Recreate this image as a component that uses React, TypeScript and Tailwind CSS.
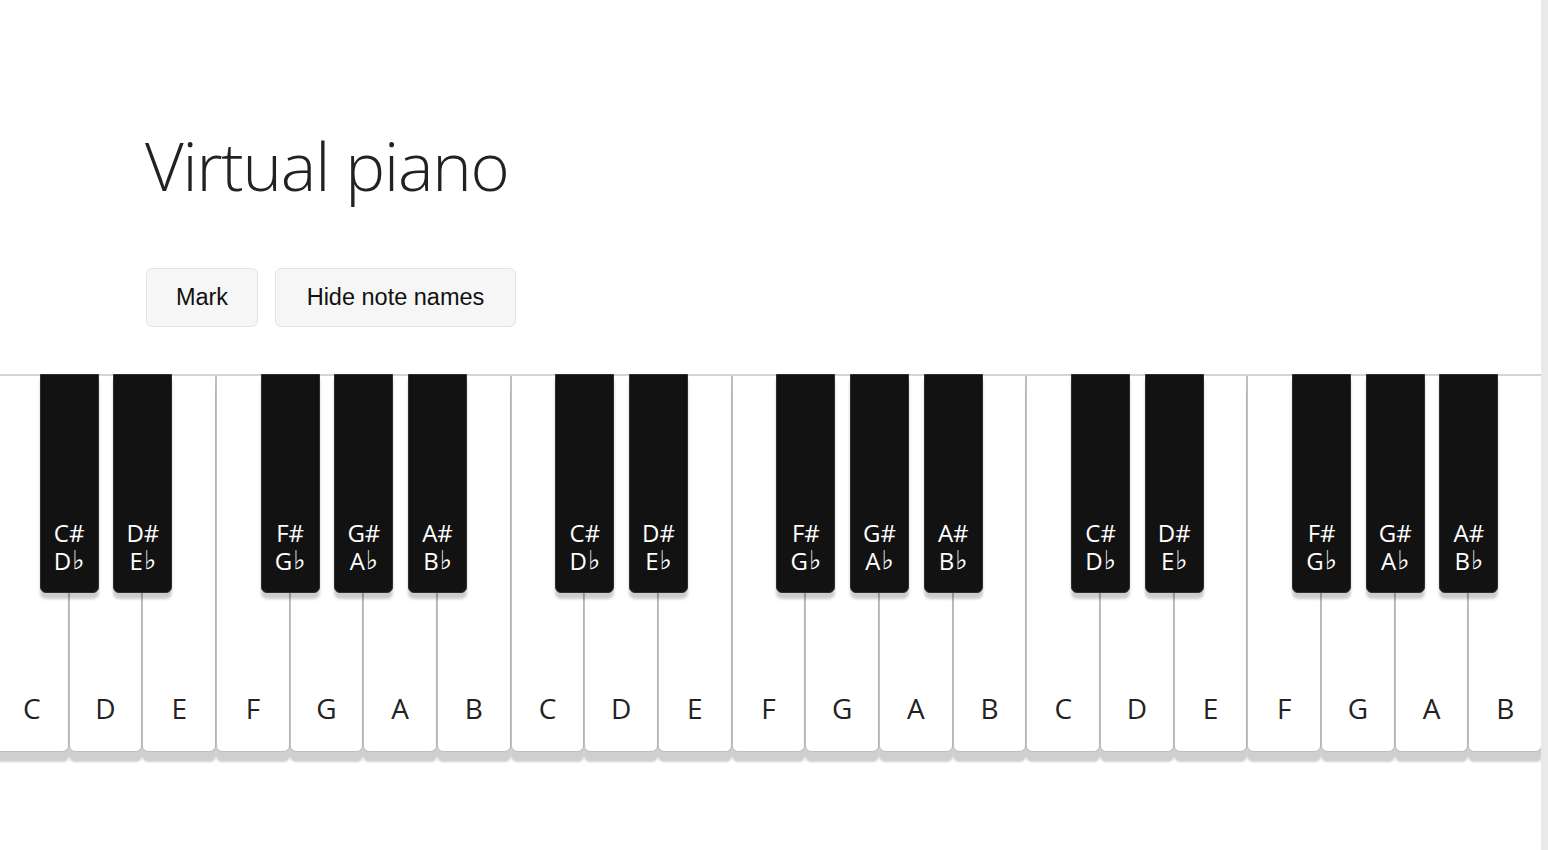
import React from "react";

type WhiteKey = { name: string; black?: [string, string] };

const octave: WhiteKey[] = [
  { name: "C", black: ["C#", "D"] },
  { name: "D", black: ["D#", "E"] },
  { name: "E" },
  { name: "F", black: ["F#", "G"] },
  { name: "G", black: ["G#", "A"] },
  { name: "A", black: ["A#", "B"] },
  { name: "B" },
];

const keys: WhiteKey[] = [...octave, ...octave, ...octave];

export default function App() {
  return (
    <div className="flex h-[850px] w-[1548px] overflow-hidden bg-white">
      <main className="relative h-full w-[1541px] overflow-hidden">
        <div className="pl-[145px]">
          <h1
            className="mt-[124px] text-[67px] leading-[82px] font-light tracking-[-1.2px] text-[#222222]"
            style={{ fontFamily: '"Open Sans", "Liberation Sans", sans-serif' }}
          >
            Virtual piano
          </h1>
          <div
            className="mt-[62px] ml-[1px] flex gap-[17px] text-[23.5px] text-[#111111]"
            style={{ fontFamily: '"Liberation Sans", Arial, sans-serif' }}
          >
            <button className="flex h-[59px] w-[112px] items-center justify-center rounded-[6px] border border-[#e4e4e4] bg-[#f6f6f6]">
              Mark
            </button>
            <button className="flex h-[59px] w-[241px] items-center justify-center rounded-[6px] border border-[#e4e4e4] bg-[#f6f6f6]">
              Hide note names
            </button>
          </div>
        </div>

        <div className="mt-[47px] border-t-2 border-[#d4d4d4]">
          <div
            className="ml-[-5px] flex w-[1547px]"
            style={{ fontFamily: '"Open Sans", "DejaVu Sans", sans-serif' }}
          >
            {keys.map((k, i) => (
              <div
                key={i}
                className="relative flex h-[376px] flex-1 flex-col items-center justify-end rounded-b-[6px] border-x border-b border-[#bfbfbf] bg-white pb-[24px] shadow-[0_10px_2px_rgba(0,0,0,0.19)]"
              >
                <span className="text-[28px] leading-[38px] text-[#222222]">{k.name}</span>
                {k.black && (
                  <div className="absolute top-[-2px] right-[-31px] z-10 flex h-[219px] w-[59px] flex-col items-center justify-end rounded-b-[6px] border border-[#2e2e2e] bg-[#121212] pb-[17px] font-medium text-white shadow-[0_6px_3px_rgba(0,0,0,0.2)]">
                    <span className="text-[24px] leading-[28px]">{k.black[0]}</span>
                    <span className="flex h-[28px] items-end text-[24px] leading-[28px]">
                      {k.black[1]}
                      <span
                        className="ml-[1px] text-[26px] leading-[29px] font-bold"
                        style={{ fontFamily: '"DejaVu Sans", sans-serif' }}
                      >
                        ♭
                      </span>
                    </span>
                  </div>
                )}
              </div>
            ))}
          </div>
        </div>
      </main>
      <div className="h-full w-[7px] bg-[#e9e9e9]" />
    </div>
  );
}
